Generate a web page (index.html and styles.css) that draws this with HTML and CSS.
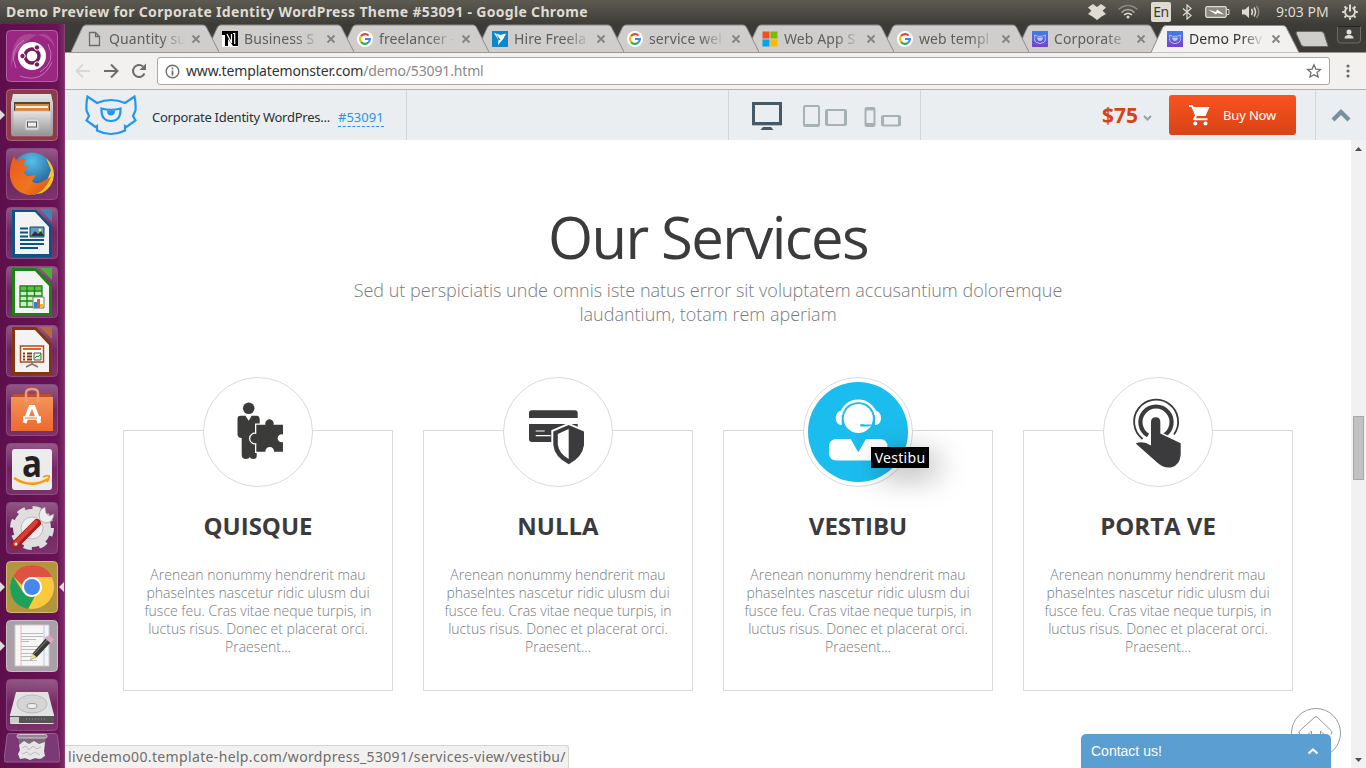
FILE: index.html
```html
<!DOCTYPE html>
<html lang="en">
<head>
<meta charset="utf-8">
<title>Demo Preview for Corporate Identity WordPress Theme #53091</title>
<link rel="stylesheet" href="styles.css">
</head>
<body>
<svg class="defs" width="0" height="0">
  <defs>
    <linearGradient id="tile" x1="0" y1="0" x2="0" y2="1"><stop offset="0" stop-color="#fff" stop-opacity=".3"/><stop offset=".5" stop-color="#fff" stop-opacity=".08"/><stop offset="1" stop-color="#fff" stop-opacity=".14"/></linearGradient>
    <linearGradient id="metal" x1="0" y1="0" x2="0" y2="1"><stop offset="0" stop-color="#e4e4e4"/><stop offset="1" stop-color="#929292"/></linearGradient>
    <linearGradient id="tm" x1="0" y1="0" x2="0" y2="1"><stop offset="0" stop-color="#3f7ee6"/><stop offset="1" stop-color="#7a3fd0"/></linearGradient>
    <linearGradient id="flame" x1="0" y1="0" x2="1" y2="1"><stop offset="0" stop-color="#e8571c"/><stop offset=".6" stop-color="#f0761f"/><stop offset="1" stop-color="#e04a16"/></linearGradient>
    <radialGradient id="globe" cx=".5" cy=".2" r=".8"><stop offset="0" stop-color="#56c0ea"/><stop offset="1" stop-color="#143f80"/></radialGradient>
    <linearGradient id="bag" x1="0" y1="0" x2="0" y2="1"><stop offset="0" stop-color="#f2935a"/><stop offset="1" stop-color="#ee6a2c"/></linearGradient>
  </defs>
  <symbol id="google" viewBox="0 0 16 16"><circle cx="8" cy="8" r="8" fill="#fff"/><g fill="none" stroke-width="2.1"><path d="M4 5.2A4.9 4.9 0 0 1 11.6 4.6" stroke="#ea4335"/><path d="M4 10.8A4.9 4.9 0 0 1 4 5.2" stroke="#fbbc05"/><path d="M11.4 11.5A4.9 4.9 0 0 1 4 10.8" stroke="#34a853"/><path d="M8 8h4.9A4.9 4.9 0 0 1 11.4 11.5" stroke="#4285f4"/></g></symbol>
  <symbol id="monster" viewBox="0 0 16 16"><path fill="url(#tm)" d="M0 0h16v16H0z"/><path d="M2.500 4l3 1.200h5l3-1.200-.4 3.500.6 1.400-1.600 2.400Q8 14 3.900 11.300L2.300 8.900l.6-1.400z" fill="none" stroke="#a9c0ff"/><path d="M5 6.500h6Q10.500 10 8 10T5 6.500z" fill="#b9c8ff"/></symbol>
  <symbol id="tabshape" viewBox="0 0 148 28"><path d="M0 28 11.500 3.200Q12.700 1 15 1h117q2.300 0 3.400 2.200L148 28z" fill="currentColor"/><path d="M0 28 11.500 3.200Q12.700 1 15 1h117q2.300 0 3.400 2.200L148 28" fill="none" stroke="#8d8b88"/></symbol>
</svg>

<header class="titlebar">
  <div class="window-title">Demo Preview for Corporate Identity WordPress Theme #53091 - Google Chrome</div>
  <div class="indicators">
    <svg width="20" height="18" viewBox="0 0 20 18"><path d="M1 4.500 6 1l4 3 4-3 5 3.500-3.400 3.200L19 11l-4 2.200-5 3.800-5-3.800L1 11l3.400-3.300z" fill="#dfdbd2"/></svg>
    <svg class="wifi" width="20" height="16" viewBox="0 0 20 16" fill="none" stroke-width="1.600"><path d="M.5 5.500Q10-2.500 19.500 5.500" stroke="#8b897f"/><path d="M3.500 8.500Q10 2.500 16.500 8.500" stroke="#aaa89d"/><path d="M6 11q4-3.500 8 0" stroke="#dfdbd2"/><circle cx="10" cy="13" r="1.500" fill="#dfdbd2"/></svg>
    <span class="lang">En</span>
    <svg class="bt" width="10" height="16" viewBox="0 0 10 16" fill="none" stroke="#dfdbd2" stroke-width="1.200"><path d="M1 4.500 9 11.500 5 15V1l4 3.500-8 7"/></svg>
    <svg class="battery" width="25" height="12" viewBox="0 0 25 12"><rect x=".7" y=".7" width="20.600" height="10.600" rx="1.500" fill="#8b897f" stroke="#dfdbd2" stroke-width="1.300"/><path d="M22 3.500h2v5h-2" fill="none" stroke="#dfdbd2"/><path d="M3 3.500 11 6l1-2.500 7 5-7-1.500-1 1.500z" fill="#fff"/></svg>
    <svg class="sound" width="20" height="16" viewBox="0 0 20 16"><path d="M1 5.500h3L8 2v12L4 10.500H1z" fill="#dfdbd2"/><g fill="none" stroke-width="1.500"><path d="M10.500 5q2 3 0 6M13 3.500q3 4.500 0 9" stroke="#dfdbd2"/><path d="M15.500 2q4.500 6 0 12" stroke="#8b897f"/></g></svg>
    <span class="clock">9:03 PM</span>
    <svg class="gear" width="16" height="16" viewBox="0 0 16 16" fill="none" stroke="#dfdbd2"><path d="M5.500 3.500a5 5 0 1 0 5 0" stroke-width="2"/><path d="M8 .5v7M.2 8h2M13.800 8h2M8 13.800v2M2.500 2.500l1.500 1.500M13.500 2.500 12 4M2.500 13.500 4 12M13.500 13.500 12 12" stroke-width="2"/></svg>
  </div>
</header>

<div class="desktop">
  <nav class="launcher">
    <svg class="tile" viewBox="0 0 52 52"><rect x=".5" y=".5" width="51" height="51" rx="4" fill="#9a2781" stroke="#b560a4"/><path d="M5 50Q2 24 24 9T50 24Q48 6 25 4T5 50" fill="#fff" opacity=".15"/><path d="M10 38Q2 20 18 10M42 14q9 18-8 28M14 46q22 8 32-14" stroke="#e0a5d4" opacity=".6" fill="none"/><circle cx="26" cy="26" r="14" fill="#fff"/><circle cx="26" cy="26" r="7" fill="none" stroke="#761c5d" stroke-width="3.400"/><g fill="#761c5d" stroke="#fff"><circle cx="16.500" cy="26" r="2.700"/><circle cx="31" cy="17.500" r="2.700"/><circle cx="31" cy="34.500" r="2.700"/></g></svg>
    <svg class="tile" viewBox="0 0 52 52"><rect x=".5" y=".5" width="51" height="51" rx="4" fill="#8d3a4c" stroke="#ad6877"/><path d="M7 5h38l2 9v31q0 2-2 2H7q-2 0-2-2V14z" fill="url(#metal)"/><path d="M8 13h36v10H8z" fill="#4c4845"/><path d="M9 15h34v8H9z" fill="#e0843b"/><path d="M10 17h32v2H10z" fill="#fff0d8"/><path d="M7 22h38v25H7z" fill="url(#metal)" stroke="#aaa" stroke-width=".5"/><rect x="19" y="30" width="14" height="11" rx="2" fill="#ddd" stroke="#bbb"/><rect x="21.500" y="33" width="9" height="5" fill="#eee" stroke="#555"/></svg>
    <svg class="tile" viewBox="0 0 52 52"><rect x=".5" y=".5" width="51" height="51" rx="4" fill="url(#tile)" stroke="#8b4c83"/><circle cx="26" cy="26" r="21.500" fill="url(#globe)"/><path d="M40 10q8 7 8 17-1 12-12 18l-10 2 14-12 5-13z" fill="#f7c52c"/><path d="M8 8q1 4 4 5 5-3 8-2-3 4-2 7l5 1-5 5q1 4 5 4l7-1-4 6q4 5 13-1l6-3Q37 48 22 47 7 44 4 29 3 18 8 8z" fill="url(#flame)"/></svg>
    <svg class="tile" viewBox="0 0 52 52"><rect x=".5" y=".5" width="51" height="51" rx="4" fill="url(#tile)" stroke="#8b4c83"/><path d="M6 3h24l16 16v31H6z" fill="#0b5585"/><path d="M34 2h12v13z" fill="#3d86b4"/><path d="M9 5h20l14 15v27H9z" fill="#f3f3f3"/><path d="M14 21.500h8M14 25.500h8M14 29.500h8M14 33h24M14 37h24M14 41h18" stroke="#0b5585" stroke-width="2"/><path d="M24 20h14v10H24z" fill="#5e9ec7" stroke="#1d4765"/><path d="m25 29 4-5 3 3 3-3 3 5z" fill="#333"/><circle cx="34" cy="23" r="1.500" fill="#ffe36b"/></svg>
    <svg class="tile" viewBox="0 0 52 52"><rect x=".5" y=".5" width="51" height="51" rx="4" fill="url(#tile)" stroke="#8b4c83"/><path d="M6 2h24l16 17v31H6z" fill="#168312"/><path d="M34 2h12v12z" fill="#46b336"/><path d="M9 5h20l14 15v27H9z" fill="#f3f3f3"/><path d="M14 20h22v21H14z" fill="#c9efbe"/><path d="M14 20.500h22v4H14z" fill="#5fbf4a"/><path d="M14 20h22v21H14zM21 20v21M28.500 20v21M14 25h22M14 30h22M14 35h22" fill="none" stroke="#168312" stroke-width="1.300"/><path d="M27 31h11v11H27z" fill="#fff" stroke="#777"/><path d="M28 36h3v6h-3z" fill="#2784d8"/><path d="M31 33h3v9h-3z" fill="#e05c24"/><path d="M34 38h3v4h-3z" fill="#f0b92c"/></svg>
    <svg class="tile" viewBox="0 0 52 52"><rect x=".5" y=".5" width="51" height="51" rx="4" fill="url(#tile)" stroke="#8b4c83"/><path d="M6 2h24l16 17v31H6z" fill="#843510"/><path d="M34 2h12v12z" fill="#b96a3c"/><path d="M9 5h20l14 15v27H9z" fill="#f3f3f3"/><path d="M14.500 21h23v16h-23z" fill="#fff" stroke="#b64a16" stroke-width="1.500"/><path d="M17 24h18" stroke="#d5672f" stroke-width="2"/><path d="M17 28.500h2m2 0h5M17 31.500h2m2 0h5M17 34.500h2m2 0h5" stroke="#843510" stroke-width="2"/><path d="M28 28h7v7h-7z" fill="#e3f1dd" stroke="#555"/><path d="m29 33 2-2 1 1 3-3" fill="none" stroke="#259322"/><path d="M26 37v2l-6 3M26 39l6 3" fill="none" stroke="#777" stroke-width="1.700"/></svg>
    <svg class="tile" viewBox="0 0 52 52"><rect x=".5" y=".5" width="51" height="51" rx="4" fill="url(#tile)" stroke="#8b4c83"/><path d="M5 14l2-4h38l2 4z" fill="#b9522c"/><path d="M5 13h42v34H5z" fill="url(#bag)"/><path d="M20 18V9q0-4 6-4t6 4v9" fill="none" stroke="#f19a70" stroke-width="2.500"/><path d="M18.500 39 24.500 23h3L33.500 39" fill="none" stroke="#fff" stroke-width="3.800"/><path d="M17 34h18" stroke="#fff" stroke-width="3.500"/><path d="M19 34h12" stroke="#ef7031"/></svg>
    <svg class="tile" viewBox="0 0 52 52"><rect x=".5" y=".5" width="51" height="51" rx="4" fill="url(#tile)" stroke="#8b4c83"/><rect x="6" y="6" width="40" height="41" rx="3" fill="#ececec"/><text x="16" y="33.500" class="amazon" textLength="20" lengthAdjust="spacingAndGlyphs">a</text><path d="M8 35q17 11 34 1" fill="none" stroke="#f90" stroke-width="2.600"/><path d="M37 34q5-2 6-1t-2 6" fill="none" stroke="#f90" stroke-width="1.800"/></svg>
    <svg class="tile" viewBox="0 0 52 52"><rect x=".5" y=".5" width="51" height="51" rx="4" fill="url(#tile)" stroke="#8b4c83"/><circle cx="26" cy="26" r="14" fill="none" stroke="#dedede" stroke-width="10"/><circle cx="26" cy="26" r="19.500" fill="none" stroke="#dedede" stroke-width="5" stroke-dasharray="8 7.310"/><circle cx="26" cy="26" r="11" fill="#eee" stroke="#bbb"/><path d="M31 22 38 14" stroke="#eaeaea" stroke-width="7"/><path d="M34 18q-3-10 5-13l1 6 3 3 5-2q-1 9-9 9z" fill="#eee" stroke="#999" stroke-width=".7"/><path d="M9 43 31 21" stroke="#a81d1d" stroke-width="8" stroke-linecap="round"/><path d="M9 42 30 20" stroke="#dc3e36" stroke-width="4" stroke-linecap="round"/><circle cx="10" cy="42" r="1.500" fill="#fff"/></svg>
    <svg class="tile" viewBox="0 0 52 52"><rect x=".5" y=".5" width="51" height="51" rx="4" fill="#b3943f" stroke="#cfbb76"/><circle cx="26" cy="26" r="22" fill="#fac93d"/><path d="M7 15Q13 4 26 4q14 0 20 12H26q-7 0-10 8z" fill="#de5244"/><path d="M7 15 17 31q3 5 9 5l3-1-7 13Q5 44 4 27 4 20 7 15z" fill="#1fa15c"/><circle cx="26" cy="26" r="10" fill="#fff"/><circle cx="26" cy="26" r="8" fill="#4687ec"/></svg>
    <svg class="tile" viewBox="0 0 52 52"><rect x=".5" y=".5" width="51" height="51" rx="4" fill="#aaa0a8" stroke="#c8c0c6"/><path d="M9 5h34v41H9z" fill="#f6f6f6" stroke="#ccc"/><path d="M15 5v41" stroke="#f2b5b5"/><path d="M38 5v41" stroke="#b5c7ef"/><path d="M15 13.500h22M15 16.500h22M15 19.500h15M15 21.500h8M15 26.500h20M15 29.500h18M15 33.500h12M15 36.500h10M15 40.500h16" stroke="#bbb"/><path d="m24 40 3-7 13-15 5 4-14 15z" fill="#3a3a36"/><path d="m28 34 13-14" stroke="#8b8b84"/><path d="m24 40 2.500-6.500 4 3.500z" fill="#e9df85"/><path d="m40 18 3-1.500 3.500 3L45 22z" fill="#e89bc4" stroke="#d9a8c3" stroke-width="2"/></svg>
    <svg class="tile" viewBox="0 0 52 52"><rect x=".5" y=".5" width="51" height="51" rx="4" fill="url(#tile)" stroke="#8b4c83"/><path d="M10 13h32l6 23v8q0 1-2 1H6q-2 0-2-1v-8z" fill="#e2e2e2"/><path d="M4 37h44v7H4z" fill="#555"/><path d="M4 38h9v6H4z" fill="#ccc"/><ellipse cx="26" cy="25" rx="15" ry="9" fill="#d5d5d5" stroke="#bbb"/><ellipse cx="26" cy="27" rx="5" ry="2.500" fill="#eee" stroke="#999"/><path d="M20 40h20" stroke="#888" stroke-dasharray="1 2"/></svg>
    <svg class="trash" viewBox="0 0 56 30"><path d="M5 .5h46q2 0 2.500 2L56 27q0 2-2 2H2q-2 0-2-2L3 2.500Q3.500.5 5 .5z" fill="#7c3877" stroke="#93618e"/><path d="M14 3h28l-3 23H17z" fill="#7d6a7c"/><rect x="13" y="1.500" width="30" height="3.500" rx="1.700" fill="#948392" stroke="#ddd" stroke-width=".8"/><path d="M15 12l5-4 5 3 5-3 5 3 6-2-1 9 1 5-5 3-5-1-5 2-5-2-5 1-2-5 2-4z" fill="#e6e6e6"/><path d="m18 15 4-2 3 4 4-4 4 3 4-2M18 21l5-2 3 3 5-3 5 3" fill="none" stroke="#bbb"/></svg>
    <i class="pip running files"></i><i class="pip running chrome"></i><i class="pip running editor"></i><i class="pip focused"></i>
  </nav>

  <main class="browser">
    <div class="tabstrip">
      <div class="tab"><svg class="shape"><use href="#tabshape"/></svg><svg class="fav" viewBox="0 0 16 16"><path d="M2.500 1.500h6l4 4v9h-10zM8.500 1.500v4h4" fill="none" stroke="#6b6b6b" stroke-width="1.300"/></svg><span class="label">Quantity su</span><svg class="close" viewBox="0 0 8 8"><path d="m.5.5 7 7m0-7-7 7"/></svg></div>
      <div class="tab"><svg class="shape"><use href="#tabshape"/></svg><svg class="fav" viewBox="0 0 16 16"><path fill="#fff" d="M0 0h16v16H0z"/><path d="M0 0h16v15h-5L6 8v7H3V4H0z" fill="#000"/><path d="M5 3 9.500 12V3M11 2.500h1.700V13" fill="none" stroke="#fff" stroke-width="1.200"/></svg><span class="label">Business S</span><svg class="close" viewBox="0 0 8 8"><path d="m.5.5 7 7m0-7-7 7"/></svg></div>
      <div class="tab"><svg class="shape"><use href="#tabshape"/></svg><svg class="fav"><use href="#google"/></svg><span class="label">freelancer -</span><svg class="close" viewBox="0 0 8 8"><path d="m.5.5 7 7m0-7-7 7"/></svg></div>
      <div class="tab"><svg class="shape"><use href="#tabshape"/></svg><svg class="fav" viewBox="0 0 16 16"><path fill="#0e86c8" d="M0 0h16v16H0z"/><path d="m2 2 6.500 2L14 2.500l-2.500 5L6 14l.5-5z" fill="#fff"/><path d="m4 2.600 4.500 6.400L6.500 9z" fill="#0e86c8"/></svg><span class="label">Hire Freela</span><svg class="close" viewBox="0 0 8 8"><path d="m.5.5 7 7m0-7-7 7"/></svg></div>
      <div class="tab"><svg class="shape"><use href="#tabshape"/></svg><svg class="fav"><use href="#google"/></svg><span class="label">service wel</span><svg class="close" viewBox="0 0 8 8"><path d="m.5.5 7 7m0-7-7 7"/></svg></div>
      <div class="tab"><svg class="shape"><use href="#tabshape"/></svg><svg class="fav" viewBox="0 0 16 16"><path fill="#f25022" d="M.5.500h7v7h-7z"/><path fill="#7fba00" d="M8.500.500h7v7h-7z"/><path fill="#00a4ef" d="M.5 8.500h7v7h-7z"/><path fill="#ffb900" d="M8.500 8.500h7v7h-7z"/></svg><span class="label">Web App S</span><svg class="close" viewBox="0 0 8 8"><path d="m.5.5 7 7m0-7-7 7"/></svg></div>
      <div class="tab"><svg class="shape"><use href="#tabshape"/></svg><svg class="fav"><use href="#google"/></svg><span class="label">web templ</span><svg class="close" viewBox="0 0 8 8"><path d="m.5.5 7 7m0-7-7 7"/></svg></div>
      <div class="tab"><svg class="shape"><use href="#tabshape"/></svg><svg class="fav"><use href="#monster"/></svg><span class="label">Corporate</span><svg class="close" viewBox="0 0 8 8"><path d="m.5.5 7 7m0-7-7 7"/></svg></div>
      <div class="tab active"><svg class="shape"><use href="#tabshape"/></svg><svg class="fav"><use href="#monster"/></svg><span class="label">Demo Prev</span><svg class="close" viewBox="0 0 8 8"><path d="m.5.5 7 7m0-7-7 7"/></svg></div>
      <svg class="newtab" width="34" height="16" viewBox="0 0 34 16"><path d="M3 .5h23q2 0 3 2L33 15q0 .5-1 .5H9q-2 0-3-2L1 2Q1 .5 3 .5z" fill="#d0cecd" stroke="#6a6863"/></svg>
      <svg class="profile" width="24" height="18" viewBox="0 0 24 18"><path d="M.5 0v14q0 3 3 3h17q3 0 3-3V0" fill="#42403b" stroke="#6e6c66"/><path d="M.5.500h23" stroke="#24231f"/><circle cx="12" cy="6" r="2.500" fill="#dedede"/><path d="M7.500 12.500q0-3.500 4.500-3.500t4.500 3.500z" fill="#dedede"/></svg>
    </div>

    <div class="toolbar">
      <svg class="nav" width="76" height="18" viewBox="0 0 76 18" fill="none" stroke-width="2"><path d="M15 9H2M8 2.500 1.500 9 8 15.500" stroke="#dad8d6"/><path d="M29 9h13M36 2.500 42.500 9 36 15.500" stroke="#6e6c6a"/><path d="M69.500 11.500a6 6 0 1 1-1.500-7" stroke="#6e6c6a"/><path d="M71 1.500V8h-6.500z" fill="#6e6c6a"/></svg>
      <div class="omnibox">
        <svg width="15" height="15" viewBox="0 0 15 15"><circle cx="7.500" cy="7.500" r="6.300" fill="none" stroke="#6b6b6b" stroke-width="1.400"/><path d="M7.500 3.500v1.700M7.500 6.500v5" stroke="#6b6b6b" stroke-width="1.700"/></svg>
        <span class="url">www.templatemonster.com<span class="path">/demo/53091.html</span></span>
        <svg class="star" width="16" height="16" viewBox="0 0 16 16"><path d="m8 1.800 1.900 4.300 4.600.4-3.500 3 1.100 4.600L8 11.700l-4.100 2.400L5 9.500l-3.500-3 4.600-.4z" fill="none" stroke="#6b6b6b" stroke-width="1.200"/></svg>
      </div>
      <svg class="kebab" width="4" height="14" viewBox="0 0 4 14" fill="#6b6b6b"><circle cx="2" cy="2" r="1.600"/><circle cx="2" cy="7" r="1.600"/><circle cx="2" cy="12" r="1.600"/></svg>
    </div>

    <div class="previewbar">
      <div class="brand">
        <svg class="logo" width="52" height="42" viewBox="0 0 52 42" fill="none" stroke="#2196f3" stroke-width="2.200"><path d="M10.500 33 1.500 26.500l2.500-4.500-2.500-5.500Q1 9 2.500 2.500L12 9q14-6 28 0l9.500-6.500Q51 9 50.500 16.500L48 22l2.500 4.500-9 6.500-1.500-1v4.500Q26 43.500 12 36.500V32z"/><path d="M16.500 14.500q9.500 2.500 19 0Q36 27 26 27t-9.500-12.500z"/><path d="M22 16.500h8q0 5-4 5t-4-5z" fill="#2196f3" stroke="none"/></svg>
        <span class="theme">Corporate Identity WordPres...</span>
        <a class="theme-id">#53091</a>
      </div>
      <div class="devices">
        <svg width="31" height="29" viewBox="0 0 31 29"><path d="M1.500 2.500h27v20h-27z" fill="none" stroke="#455a66" stroke-width="3"/><path d="M0 24.500h30" stroke="#b2c0c5"/><path d="M11 26h8l2.500 3h-13z" fill="#455a66"/></svg>
        <svg width="45" height="22" viewBox="0 0 45 22" fill="none" stroke="#a5b1b5" stroke-width="2"><rect x="2" y="1" width="15" height="20" rx="1.500"/><path d="M2 20h15"/><rect x="24" y="5" width="20" height="15" rx="1.500"/><path d="M24.500 5v15M43.500 5v15" stroke-width="3"/></svg>
        <svg width="37" height="20" viewBox="0 0 37 20" fill="none" stroke="#a5b1b5" stroke-width="2"><rect x="1.500" y="1" width="9" height="18" rx="1.500"/><path d="M1.500 2h9M1.500 17.500h9" stroke-width="3"/><rect x="18" y="9" width="18" height="9.500" rx="1.500"/><path d="M18.500 9v9M35.500 9v9" stroke-width="3"/></svg>
      </div>
      <div class="price">$75<svg width="9" height="6" viewBox="0 0 9 6"><path d="m1 1 3.500 3.500L8 1" fill="none" stroke="#90a4ae" stroke-width="2"/></svg></div>
      <button class="buy"><svg width="21" height="21" viewBox="0 0 21 21" fill="#fff"><path d="M0 0h3.500l1 2H20.500L16.500 11H8l-1 2.300h11.500v2H5.500Q3.500 15 4.500 13L6 10.500 2.500 2H0z"/><circle cx="6.300" cy="18.500" r="2"/><circle cx="16.500" cy="18.500" r="2"/></svg>Buy Now</button>
      <div class="collapse"><svg width="20" height="14" viewBox="0 0 20 14"><path d="m2 12 8-8 8 8" fill="none" stroke="#78909c" stroke-width="4.300"/></svg></div>
    </div>

    <div class="viewport">
      <section class="services">
        <h1>Our Services</h1>
        <p class="lead">Sed ut perspiciatis unde omnis iste natus error sit voluptatem accusantium doloremque<br>laudantium, totam rem aperiam</p>
        <div class="cards">
          <article class="card">
            <svg class="round" viewBox="0 0 110 110"><circle class="ring" cx="55" cy="55" r="54.500"/><g fill="#3b3b39"><circle cx="45.700" cy="31.300" r="5.800"/><path d="M37.500 38.700h5l3.200 5 3-5h5q3 0 3 4V54l-3 8v17q0 3-3.500 3-2.500 0-3.500-2-1 2-3.500 2-4.500 0-4.500-4V61q-4.200 0-4.200-4V42q0-3.300 3-3.300z"/></g><path d="M53.300 47.700H62.500a4.200 4.200 0 1 1 8 0H80v9.800a4 4 0 1 0 0 7.500v9.700h-9a4.300 4 0 1 0-8.500 0h-9.200V66a4.700 4.700 0 1 1 0-9z" fill="#3b3b39" stroke="#fff" stroke-width="2.600" paint-order="stroke"/></svg>
            <h2>QUISQUE</h2>
            <p>Arenean nonummy hendrerit mau<br>phaselntes nascetur ridic ulusm dui<br>fusce feu. Cras vitae neque turpis, in<br>luctus risus. Donec et placerat orci.<br>Praesent...</p>
          </article>
          <article class="card">
            <svg class="round" viewBox="0 0 110 110"><circle class="ring" cx="55" cy="55" r="54.500"/><path d="M26 41v-5q0-2.700 2.700-2.700H72q2.700 0 2.700 2.700v5zM26 47h48.700v18H29q-3 0-3-3z" fill="#3b3b3d"/><path d="M32.700 54h9M32.700 58.700h15" stroke="#fff" stroke-width="1.200"/><path d="M65.700 48 81 54.500V68Q79.500 80 65.700 87.300 51.500 80 50.300 68V54.500z" fill="#3b3b3d" stroke="#fff" stroke-width="4" paint-order="stroke"/><path d="M65.700 52v30Q56 76.500 54.800 67.500V57z" fill="#fff"/></svg>
            <h2>NULLA</h2>
            <p>Arenean nonummy hendrerit mau<br>phaselntes nascetur ridic ulusm dui<br>fusce feu. Cras vitae neque turpis, in<br>luctus risus. Donec et placerat orci.<br>Praesent...</p>
          </article>
          <article class="card hovered">
            <svg class="round" viewBox="0 0 110 110"><circle class="ring" cx="55" cy="55" r="54.500"/><circle cx="55" cy="55" r="50" fill="#1bbdee"/><circle cx="55.300" cy="41.500" r="14.600" fill="#fff"/><path d="M38 38a17.400 15.800 0 0 1 34.600 0" fill="none" stroke="#fff" stroke-width="2.700"/><path d="M38.700 33.500v14.500q-6-.5-6-7t6-7.500zM72 33.500v14.500q6-.5 6-7t-6-7.500z" fill="#fff"/><path d="M69 47.500h-7q-2.500-1-5 .3-1 1.300 1 1.800h8l2.500-1.600" fill="#1bbdee"/><path d="M26 70q0-8 8-8h13.700L55.300 75.300 63 62h13.500q8 0 8 8v5.500q0 8-8 8H34q-8 0-8-8z" fill="#fff"/></svg>
            <span class="tooltip">Vestibu</span>
            <h2>VESTIBU</h2>
            <p>Arenean nonummy hendrerit mau<br>phaselntes nascetur ridic ulusm dui<br>fusce feu. Cras vitae neque turpis, in<br>luctus risus. Donec et placerat orci.<br>Praesent...</p>
          </article>
          <article class="card">
            <svg class="round" viewBox="0 0 110 110"><circle class="ring" cx="55" cy="55" r="54.500"/><g fill="none" stroke="#3b3b3d"><path d="M39.500 62A22 22 0 1 1 71 57.500" stroke-width="1.800"/><path d="M45 58.500A15.600 15.600 0 1 1 61 58.500" stroke-width="4.200"/></g><path d="M48 45q0-4.700 4.700-4.700T57.300 45v11.500L77.700 66.300V78q-1 10-9 12.200-7 1.800-14-4.200L32.700 66.500q7-3.500 15.300 2z" fill="#3b3b3d" stroke="#fff" stroke-width="3" paint-order="stroke"/></svg>
            <h2>PORTA VE</h2>
            <p>Arenean nonummy hendrerit mau<br>phaselntes nascetur ridic ulusm dui<br>fusce feu. Cras vitae neque turpis, in<br>luctus risus. Donec et placerat orci.<br>Praesent...</p>
          </article>
        </div>
      </section>
      <div class="scrollbar"><svg width="7" height="4" viewBox="0 0 7 4"><path d="M0 4 3.500 0 7 4z" fill="#505050"/></svg><div class="thumb"></div><svg width="7" height="4" viewBox="0 0 7 4"><path d="M0 0 3.500 4 7 0z" fill="#505050"/></svg></div>
      <svg class="totop" width="50" height="50" viewBox="0 0 50 50" fill="none" stroke="#999"><circle cx="25" cy="25" r="24.500"/><path d="M9 26.500 8 24Q8 23.500 9 22.500L24 9q1-.7 2 0L40 22.500q1 1 1 1.500l-1 2.500M16.500 27l4-4v4M29.500 27v-4l4 4"/></svg>
      <div class="contact">Contact us!<svg width="12" height="8" viewBox="0 0 12 8"><path d="m1.500 6.500 4.500-4 4.500 4" fill="none" stroke="#fff" stroke-width="2.200"/></svg></div>
      <div class="status">livedemo00.template-help.com/wordpress_53091/services-view/vestibu/</div>
    </div>
  </main>
</div>
</body>
</html>
```
FILE: styles.css
```css
* { box-sizing: border-box; }
body { margin: 0; width: 1366px; height: 768px; overflow: hidden; background: #fff; font-family: "Noto Sans", "Open Sans", sans-serif; }
svg { display: block; flex: none; }
.defs { position: absolute; }

.titlebar { height: 24px; display: flex; justify-content: space-between; align-items: center; padding: 0 8px 0 6px; background: linear-gradient(#5d5b51, #3d3c38); color: #dfdbd2; }
.window-title { font-weight: 700; font-size: 14px; line-height: 24px; letter-spacing: 0.32px; white-space: nowrap; }
.indicators { display: flex; align-items: center; }
.wifi { margin-left: 11px; }
.lang { margin-left: 13px; width: 20px; height: 20px; border-radius: 2px; background: #dfdbd2; color: #3c3b37; font-size: 14px; line-height: 20px; text-align: center; letter-spacing: -0.5px; }
.bt { margin-left: 11px; }
.battery { margin-left: 13px; }
.sound { margin-left: 11px; }
.clock { width: 54px; margin-left: 15px; font-size: 14px; line-height: 24px; letter-spacing: 0; white-space: nowrap; }
.gear { margin-left: 12px; }

.desktop { display: flex; height: 744px; }
.launcher { position: relative; width: 65px; flex: none; display: flex; flex-direction: column; gap: 7px; padding: 6px 0 0 6px; background: linear-gradient(90deg, #5d0f4c, #6a1356 90%, #7b2c69); border-right: 1px solid #85406f; }
.tile { width: 52px; height: 52px; overflow: visible; }
.trash { width: 56px; height: 30px; margin: -5px 0 0 -2px; }
.amazon { font: 700 37px "Open Sans", sans-serif; fill: #222; }
.pip { position: absolute; width: 0; height: 0; border: 5px solid transparent; }
.running { left: 0; border-left-color: #ddd; border-right: 0; }
.focused { right: 0; top: 558px; border-right-color: #ddd; border-left: 0; }
.files { top: 86px; }
.chrome { top: 558px; }
.editor { top: 617px; }

.browser { flex: 1; min-width: 0; display: flex; flex-direction: column; }
.tabstrip { height: 29px; display: flex; padding-left: 6px; background: #3c3b37; border-bottom: 1px solid #999694; }
.tab { position: relative; width: 148px; height: 28px; margin-right: -13px; flex: none; display: flex; align-items: center; padding: 1px 0 0 16px; color: #5f5e5c; }
.tab:nth-child(1) { z-index: 8; }
.tab:nth-child(2) { z-index: 7; }
.tab:nth-child(3) { z-index: 6; }
.tab:nth-child(4) { z-index: 5; }
.tab:nth-child(5) { z-index: 4; }
.tab:nth-child(6) { z-index: 3; }
.tab:nth-child(7) { z-index: 2; }
.tab:nth-child(8) { z-index: 1; }
.tab.active { z-index: 9; color: #333; height: 29px; }
.shape { position: absolute; left: 0; top: 0; width: 148px; height: 28px; color: #d0cecd; }
.active .shape { color: #f2f1f0; height: 29px; }
.fav { position: relative; width: 16px; height: 16px; }
.label { position: relative; width: 76px; margin-left: 6px; white-space: nowrap; font-size: 14px; line-height: 22px; letter-spacing: 0.1px; -webkit-mask: linear-gradient(90deg, #000 52px, transparent 76px); mask: linear-gradient(90deg, #000 52px, transparent 76px); }
.close { position: relative; width: 8px; height: 8px; margin-left: 7px; overflow: visible; stroke: #858381; stroke-width: 1.8; }
.newtab { margin: 7px 0 0 8px; position: relative; left: 12px; }
.profile { margin: 2px 0 0 20px; }
.newtab { left: 0; margin-left: 8px; }
.tab.active { margin-right: 0; }
.newtab { margin-left: -4px; }
.profile { margin-left: 8px; }

.toolbar { height: 37px; display: flex; align-items: center; background: #f2f1f0; border-bottom: 1px solid #b8afb5; }
.nav { margin-left: 10px; }
.omnibox { width: 1173px; height: 28px; margin-left: 6px; padding: 0 7px; display: flex; align-items: center; background: #fff; border: 1px solid #a9a6a3; border-radius: 3px; }
.url { flex: 1; margin-left: 6px; font-size: 14px; letter-spacing: -0.15px; line-height: 24px; color: #333; }
.path { color: #8b8987; }
.kebab { margin-left: 16px; }

.previewbar { height: 50px; display: flex; align-items: stretch; background: #ebeef1; font-family: "Noto Sans", sans-serif; }
.brand { width: 342px; display: flex; align-items: center; padding: 0 0 0 20px; border-right: 1px solid #cfd5d9; }
.theme { width: 180px; margin: 4px 0 0 15px; color: #263238; font-size: 13px; letter-spacing: -0.25px; white-space: nowrap; }
.theme-id { margin: 5px 0 0 6px; color: #2196f3; font-size: 13px; line-height: 17px; border-bottom: 1px dashed #2196f3; }
.devices { width: 193px; margin-left: 321px; padding-left: 23px; display: flex; align-items: center; border-left: 1px solid #cfd5d9; border-right: 1px solid #cfd5d9; }
.devices svg:nth-child(2) { margin: 2px 0 0 19px; }
.devices svg:nth-child(3) { margin: 4px 0 0 17px; }
.price { width: 248px; display: flex; align-items: center; justify-content: flex-end; padding-right: 17px; color: #d84315; font-size: 21px; font-weight: 700; }
.price svg { margin: 6px 0 0 5px; }
.buy { width: 127px; height: 40px; margin: 5px 0; padding: 0 0 0 20px; display: flex; align-items: center; gap: 13px; border: 0; border-radius: 3px; background: linear-gradient(#f9531f, #d84315); color: #fff; font: 13px "Noto Sans", sans-serif; letter-spacing: -0.15px; white-space: nowrap; }
.collapse { width: 51px; margin-left: 19px; display: flex; align-items: center; justify-content: center; border-left: 1px solid #cfd5d9; }

.viewport { position: relative; flex: 1; min-height: 0; display: flex; background: #fff; font-family: "Open Sans", sans-serif; }
.services { width: 1286px; flex: none; padding: 57px 0 0 0; text-align: center; }
h1 { margin: 0; color: #3b3b3d; font-size: 58px; line-height: 80px; font-weight: 400; letter-spacing: -1.6px; }
.lead { margin: 1px 0 0; color: #777b80; font-size: 18px; line-height: 24px; font-weight: 300; }
.cards { display: grid; grid-template-columns: repeat(4, 270px); gap: 30px; margin: 104px 0 0 58px; }
.card { position: relative; height: 261px; border: 1px solid #d9d9d9; }
.round { width: 110px; height: 110px; margin: -54px auto 0; }
.ring { fill: #fff; stroke: #d9d9d9; }
.card h2 { margin: 22px 0 0; color: #3b3b3d; font-size: 24px; line-height: 34px; font-weight: 700; }
.card p { margin: 23px 0 0; color: #777b80; font-size: 14px; line-height: 18px; font-weight: 300; }
.tooltip { position: absolute; left: 147px; top: 16px; width: 58px; height: 21px; background: #000; color: #fff; font-family: "Noto Sans", sans-serif; font-size: 14px; letter-spacing: 0.3px; line-height: 21px; text-align: center; box-shadow: 8px 8px 30px rgba(0, 0, 0, 0.35); }
.scrollbar { position: absolute; right: 0; top: 0; width: 15px; height: 628px; padding: 7px 0 6px; display: flex; flex-direction: column; align-items: center; background: #f1f1f1; }
.thumb { width: 11px; height: 64px; margin: 265px 0 auto; background: #c1c1c1; border: 1px solid #a8a8a8; }
.totop { position: absolute; left: 1226px; top: 568px; }
.contact { position: absolute; left: 1016px; bottom: 0; width: 250px; height: 34px; padding: 0 12px 0 10px; display: flex; align-items: center; justify-content: space-between; border-radius: 5px 5px 0 0; background: #5b9ed1; color: #fff; font: 14px "Liberation Sans", sans-serif; }
.status { position: absolute; left: 0; bottom: 0; width: 504px; height: 23px; padding-left: 3px; background: #f2f1f0; border: 1px solid #d5d3d1; border-left: 0; border-bottom: 0; border-radius: 0 3px 0 0; color: #6e6d6b; font-family: "Noto Sans", sans-serif; font-size: 14px; line-height: 22px; white-space: nowrap; letter-spacing: 0.35px; }
```
